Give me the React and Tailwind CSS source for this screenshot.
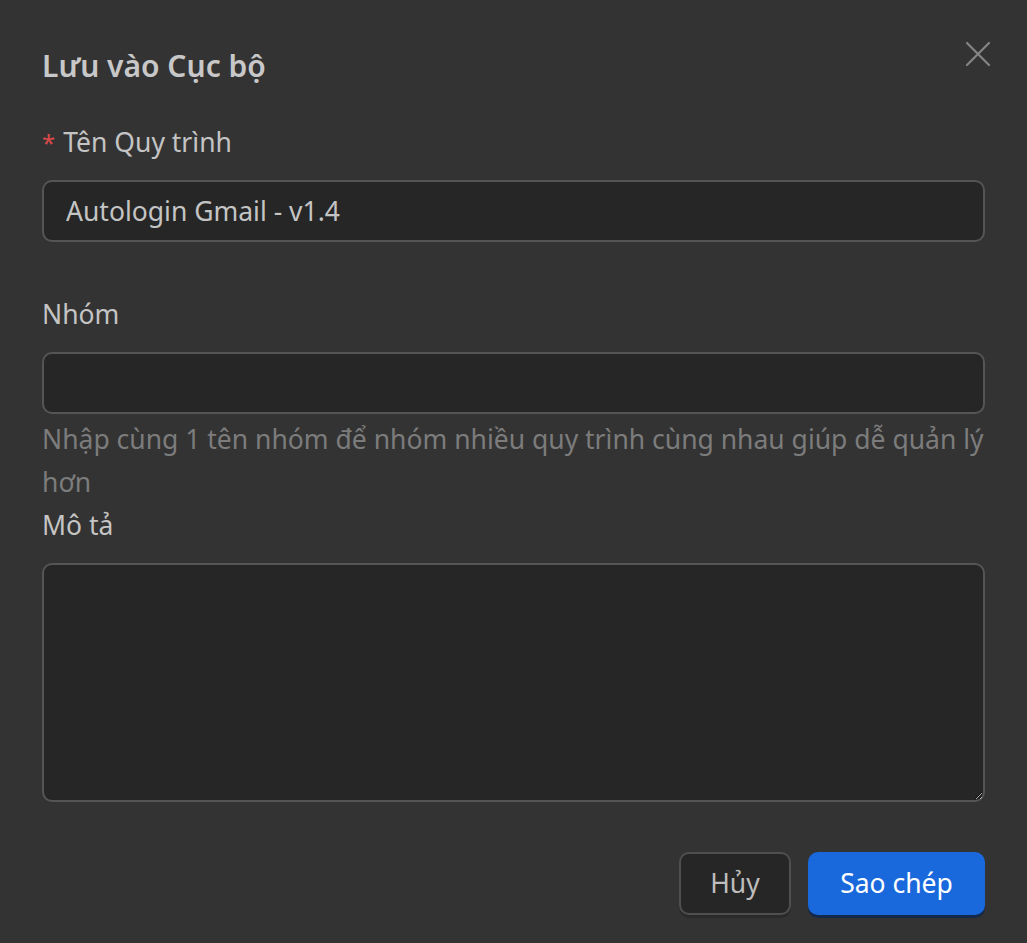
import React from "react";

const font = { fontFamily: '"Noto Sans", "Open Sans", sans-serif' };

const App = () => {
  return (
    <div
      style={font}
      className="w-full h-[943px] bg-[#333333] px-[42px] pt-[40px] flex flex-col text-[#c4c4c4] relative"
    >
      <div className="h-[50px] flex items-center text-[30px] font-semibold text-[#c8c8c8]">
        Lưu vào Cục bộ
      </div>
      <button className="absolute right-[36px] top-[41px] w-[26px] h-[26px] flex items-center justify-center">
        <svg width="26" height="26" viewBox="0 0 26 26" stroke="#858585" strokeWidth="2.2" strokeLinecap="round">
          <path d="M2 2 L24 24 M24 2 L2 24" />
        </svg>
      </button>

      <div className="mt-[35px] h-[36px] flex items-center text-[26.5px]">
        <span className="text-[#d94a4a] mr-[8px] text-[24px]">*</span>
        Tên Quy trình
      </div>
      <input
        defaultValue="Autologin Gmail - v1.4"
        className="mt-[19px] h-[62px] w-full rounded-[10px] border-2 border-[#555555] bg-[#262626] px-[22px] text-[26.5px] text-[#c4c4c4] outline-none"
      />

      <div className="mt-[55px] h-[36px] flex items-center text-[26.5px]">Nhóm</div>
      <input className="mt-[19px] h-[62px] w-full rounded-[10px] border-2 border-[#555555] bg-[#262626] px-[22px] text-[26.5px] outline-none" />
      <div className="mt-[4px] text-[26.5px] leading-[43px] text-[#7c7c7c]">
        Nhập cùng 1 tên nhóm để nhóm nhiều quy trình cùng nhau giúp dễ quản lý hơn
      </div>

      <div className="mt-[4px] h-[36px] flex items-center text-[26.5px]">Mô tả</div>
      <textarea className="mt-[19px] h-[239px] w-full rounded-[10px] border-2 border-[#555555] bg-[#262626] px-[22px] py-[12px] text-[26.5px] outline-none resize-y" />

      <div className="mt-[50px] flex justify-end gap-[17px]">
        <button className="h-[63px] w-[112px] rounded-[10px] border-2 border-[#4f4f4f] bg-[#262626] text-[26.5px] text-[#bdbdbd] shadow-[0_3px_0_#2a2a2a]">
          Hủy
        </button>
        <button className="h-[63px] w-[177px] rounded-[10px] bg-[#1a69dc] text-[26.5px] text-white shadow-[0_3px_0_#14284a]">
          Sao chép
        </button>
      </div>
    </div>
  );
};

export default App;
